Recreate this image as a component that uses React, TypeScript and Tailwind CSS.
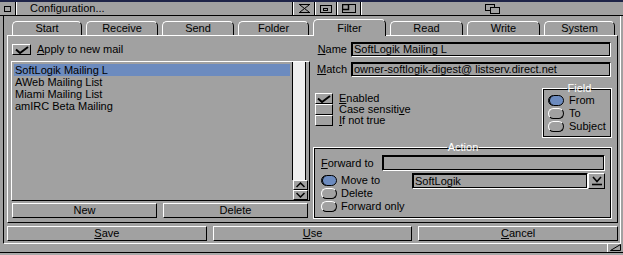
import React from "react";

const raised =
  "border border-t-white border-l-white border-r-black border-b-black";
const field =
  "border border-t-black border-l-black border-r-white border-b-white shadow-[inset_0_0_0_1px_#000]";

function U({ children }: { children: React.ReactNode }) {
  return <span className="underline decoration-1 underline-offset-[1px]">{children}</span>;
}

function Button({ children }: { children: React.ReactNode }) {
  return (
    <div className={`${raised} flex items-center justify-center`}>{children}</div>
  );
}

function CheckBox({ checked, w }: { checked?: boolean; w: string }) {
  return (
    <div className={`${w} h-[11px] shrink-0 ${raised} flex items-center justify-center`}>
      {checked && (
        <svg width="14" height="8" viewBox="0 0 14 8">
          <path d="M1 3.5 L5 7 L13 1" stroke="#000" strokeWidth="2" fill="none" />
        </svg>
      )}
    </div>
  );
}

function Radio({ on }: { on?: boolean }) {
  return on ? (
    <div className="w-[16px] h-[11px] shrink-0 rounded-[6px] border border-black bg-[#6c8bbf] shadow-[inset_1px_0_0_#000]" />
  ) : (
    <div className="w-[16px] h-[11px] shrink-0 rounded-[6px] border border-t-white border-l-white border-r-black border-b-black" />
  );
}

function TitleBar() {
  return (
    <div className="h-[16px] shrink-0 flex border-t-2 border-t-[#1e2448] border-b border-b-black">
      <div className="w-[16px] flex items-center justify-center border-r border-black">
        <div className="w-[7px] h-[6px] border border-black" />
      </div>
      <div className="flex-1 border-l border-white pl-[13px] flex items-center">
        Configuration...
      </div>
      <div className="w-[22px] border-l border-black">
        <div className="h-full border-l border-white flex items-center justify-center">
          <svg width="11" height="9" viewBox="0 0 11 9">
            <path d="M0 0.5H11M1 1L5.5 4.5L10 1M1 8L5.5 4.5L10 8M0 8.5H11" stroke="#000" fill="none" />
          </svg>
        </div>
      </div>
      <div className="w-[22px] border-l border-black">
        <div className="h-full border-l border-white flex items-center justify-center">
          <svg width="12" height="8" viewBox="0 0 12 8">
            <rect x="0.5" y="0.5" width="11" height="7" stroke="#000" fill="none" />
            <rect x="3.5" y="3.5" width="4" height="2" stroke="#000" fill="none" />
          </svg>
        </div>
      </div>
      <div className="w-[24px] border-l border-black">
        <div className="h-full border-l border-white flex items-center justify-center">
          <svg width="14" height="9" viewBox="0 0 14 9">
            <rect x="0.5" y="0.5" width="13" height="8" stroke="#000" fill="none" />
            <rect x="0.5" y="0.5" width="6" height="5" stroke="#000" strokeWidth="1.5" fill="none" />
          </svg>
        </div>
      </div>
      <div className="flex-1 border-l border-black">
        <div className="h-full border-l border-white flex items-center justify-center">
          <svg width="15" height="10" viewBox="0 0 15 10">
            <rect x="0.5" y="0.5" width="9" height="6" stroke="#000" fill="none" />
            <rect x="5.5" y="3.5" width="9" height="6" stroke="#000" fill="#a1a1a1" />
          </svg>
        </div>
      </div>
    </div>
  );
}

const tabs = [
  { label: "Start", w: "w-[70px]" },
  { label: "Receive", w: "w-[72px]" },
  { label: "Send", w: "w-[72px]" },
  { label: "Folder", w: "w-[71px]" },
  { label: "Filter", w: "w-[73px]", active: true },
  { label: "Read", w: "w-[73px]" },
  { label: "Write", w: "w-[73px]" },
  { label: "System", w: "w-[71px]" },
];

function Tabs() {
  return (
    <div className="h-[19px] shrink-0 flex items-end gap-[4px] ml-[3px] pl-[5px]">
      {tabs.map((t) => (
        <div
          key={t.label}
          className={`${t.w} ${
            t.active ? "h-[17px] -mb-px relative z-10 bg-[#a1a1a1]" : "h-[14px]"
          } rounded-t-[5px] border-t border-l border-r border-t-white border-l-white border-r-black flex items-center justify-center`}
        >
          {t.label}
        </div>
      ))}
    </div>
  );
}

const mails = ["SoftLogik Mailing L", "AWeb Mailing List", "Miami Mailing List", "amIRC Beta Mailing"];

function Chevron({ up }: { up?: boolean }) {
  return (
    <svg width="9" height="6" viewBox="0 0 9 6">
      <path d={up ? "M0.5 5L4.5 1L8.5 5" : "M0.5 1L4.5 5L8.5 1"} stroke="#000" strokeWidth="1.5" fill="none" />
    </svg>
  );
}

function LeftColumn() {
  return (
    <div className="w-[299px] flex flex-col pt-[8px]">
      <div className="h-[11px] flex items-center ml-[1px]">
        <CheckBox checked w="w-[19px]" />
        <span className="ml-[6px]">
          <U>A</U>pply to new mail
        </span>
      </div>
      <div className={`mt-[6px] h-[140px] flex ${raised}`}>
        <div className="flex-1 pt-[2px] px-[2px]">
          {mails.map((m, i) => (
            <div
              key={m}
              className={`h-[12px] flex items-center pl-[1px] ${i === 0 ? "bg-[#6c8bbf]" : ""}`}
            >
              {m}
            </div>
          ))}
        </div>
        <div className="w-[16px] mr-[1px] flex flex-col">
          <div className="flex-1 mr-[2px] border-x border-black bg-[#efefef]" />
          <div className={`ml-[1px] h-[10px] ${raised} flex items-center justify-center`}>
            <Chevron up />
          </div>
          <div className={`ml-[1px] h-[10px] ${raised} flex items-center justify-center`}>
            <Chevron />
          </div>
        </div>
      </div>
      <div className="mt-[2px] h-[15px] grid grid-cols-2 gap-[6px] pl-[1px] pr-[2px]">
        <Button>New</Button>
        <Button>Delete</Button>
      </div>
    </div>
  );
}

function LabeledField({ label, value }: { label: React.ReactNode; value: string }) {
  return (
    <div className="h-[15px] flex">
      <div className="w-[34px] flex items-center justify-end">{label}</div>
      <div className={`ml-[4px] w-[260px] ${field} flex items-center pl-[2px]`}>{value}</div>
    </div>
  );
}

const group = "border border-white shadow-[inset_0_0_0_1px_#000]";

function RightColumn() {
  return (
    <div className="w-[299px] flex flex-col pt-[6px]">
      <LabeledField label={<><U>N</U>ame</>} value="SoftLogik Mailing L" />
      <div className="mt-[5px]">
        <LabeledField label={<><U>M</U>atch</>} value="owner-softlogik-digest@ listserv.direct.net" />
      </div>
      <div className="mt-[6px] h-[55px] flex">
        <div className="flex-1 pt-[10px] pl-[2px]">
          <div className="h-[11px] flex items-center">
            <CheckBox checked w="w-[18px]" />
            <span className="ml-[6px]"><U>E</U>nabled</span>
          </div>
          <div className="h-[11px] flex items-center">
            <CheckBox w="w-[18px]" />
            <span className="ml-[6px]">Case sensiti<U>v</U>e</span>
          </div>
          <div className="h-[11px] flex items-center">
            <CheckBox w="w-[18px]" />
            <span className="ml-[6px]"><U>I</U>f not true</span>
          </div>
        </div>
        <fieldset className={`w-[70px] h-[55px] ${group} pl-[5px]`}>
          <legend className="mx-auto px-[1px] text-white leading-[11px]">Field</legend>
          {["From", "To", "Subject"].map((f, i) => (
            <div key={f} className="h-[13px] flex items-center">
              <Radio on={i === 0} />
              <span className="ml-[5px]">{f}</span>
            </div>
          ))}
        </fieldset>
      </div>
      <fieldset className={`mt-[4px] h-[77px] ${group} pl-[7px] pr-[6px]`}>
        <legend className="mx-auto px-[1px] text-white leading-[11px]">Action</legend>
        <div className="mt-[2px] h-[16px] flex items-center">
          <span><U>F</U>orward to</span>
          <div className={`ml-auto w-[223px] h-full ${field}`} />
        </div>
        <div className="mt-[3px] flex">
          <div className="w-[91px]">
            {["Move to", "Delete", "Forward only"].map((f, i) => (
              <div key={f} className="h-[13px] flex items-center">
                <Radio on={i === 0} />
                <span className="ml-[4px]">{f}</span>
              </div>
            ))}
          </div>
          <div className="-mt-[1px] h-[16px] flex w-[193px]">
            <div className={`flex-1 ${field} flex items-center pl-[2px]`}>SoftLogik</div>
            <div className={`w-[17px] ${raised} flex items-center justify-center`}>
              <svg width="10" height="10" viewBox="0 0 10 10">
                <path d="M1 1L5 5.5L9 1" stroke="#000" strokeWidth="1.6" fill="none" />
                <path d="M0 8.5H10" stroke="#000" strokeWidth="1.6" />
              </svg>
            </div>
          </div>
        </div>
      </fieldset>
    </div>
  );
}

function Panel() {
  return (
    <div className={`h-[188px] shrink-0 ml-[3px] mr-[2px] ${raised} flex gap-[3px] px-[3px]`}>
      <LeftColumn />
      <RightColumn />
    </div>
  );
}

export default function App() {
  return (
    <div className="w-[623px] h-[255px] bg-[#a1a1a1] flex flex-col overflow-hidden text-black text-[11px] leading-[11px] font-['Liberation_Sans',Arial,sans-serif] select-none">
      <TitleBar />
      <div className="h-[228px] shrink-0 flex">
        <div className="w-[3px]" />
        <div className="w-[618px] flex flex-col border-l border-r border-b border-l-black border-r-white border-b-white">
          <Tabs />
          <Panel />
          <div className="mt-[3px] h-[15px] ml-[3px] mr-[2px] grid grid-cols-3 gap-[6px]">
            <Button><U>S</U>ave</Button>
            <Button><U>U</U>se</Button>
            <Button><U>C</U>ancel</Button>
          </div>
        </div>
        <div className="flex-1" />
      </div>
      <div className="flex-1 flex flex-col">
        <div className="h-[8px] flex">
          <div className="flex-1" />
          <div className="w-[16px] border-l border-white flex items-end justify-center pb-[1px]">
            <svg width="11" height="7" viewBox="0 0 11 7">
              <path d="M0.5 6.5L10.5 0.5V6.5Z" stroke="#000" fill="none" />
            </svg>
          </div>
        </div>
        <div className="h-px bg-black" />
        <div className="flex-1 bg-[#a8a8a8]" />
      </div>
    </div>
  );
}
